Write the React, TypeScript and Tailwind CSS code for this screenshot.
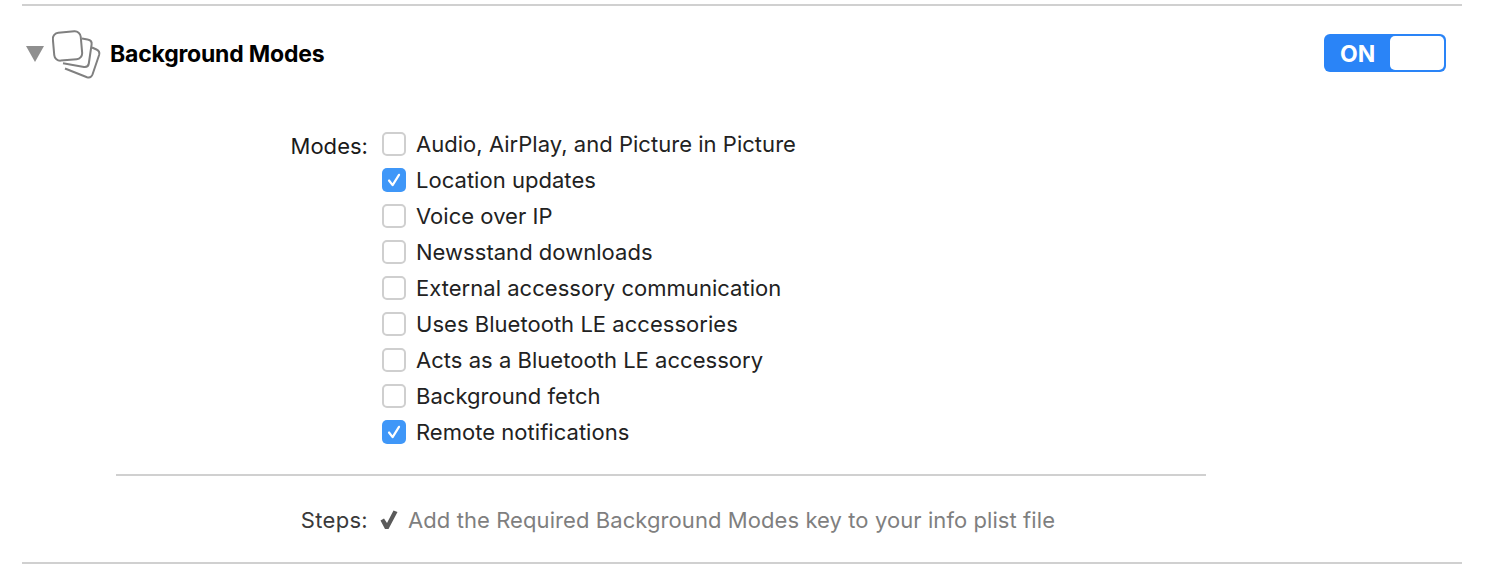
const modes = [
  { label: "Audio, AirPlay, and Picture in Picture", checked: false },
  { label: "Location updates", checked: true },
  { label: "Voice over IP", checked: false },
  { label: "Newsstand downloads", checked: false },
  { label: "External accessory communication", checked: false },
  { label: "Uses Bluetooth LE accessories", checked: false },
  { label: "Acts as a Bluetooth LE accessory", checked: false },
  { label: "Background fetch", checked: false },
  { label: "Remote notifications", checked: true },
];

function Checkbox({ checked }: { checked: boolean }) {
  if (checked) {
    return (
      <span className="flex h-6 w-6 items-center justify-center rounded-[5px] bg-[#3f97f8]">
        <svg className="h-6 w-6" viewBox="0 0 24 24" fill="none" aria-hidden="true">
          <path
            d="M7 12.5L10.6 17.2L17 6.8"
            stroke="white"
            strokeWidth="2.2"
            strokeLinecap="round"
            strokeLinejoin="round"
          />
        </svg>
      </span>
    );
  }
  return <span className="h-6 w-6 rounded-[5px] border-2 border-[#cfcfcf] bg-white" />;
}

export default function App() {
  return (
    <div className="h-[588px] w-[1494px] bg-white pt-1 pl-[22px] font-['Inter',sans-serif] text-[22px] leading-9 tracking-[0.03px]">
      <div className="h-[560px] w-[1440px] border-y-2 border-[#d0d0d0]">
        <div className="flex h-[96px] items-center justify-between pr-4">
          <div className="flex items-center">
            <svg className="ml-1 h-4 w-[18px]" viewBox="0 0 18 16" aria-hidden="true">
              <path d="M0 0H18L9 16Z" fill="#8f8f8f" />
            </svg>
            <svg className="ml-2 h-[52px] w-[50px]" viewBox="0 0 50 52" fill="none" aria-hidden="true">
              <rect x="1.5" y="4" width="28" height="28" rx="6" stroke="#808080" strokeWidth="2" transform="rotate(-5 15 18)" />
              <path d="M30 10.5L35.5 11.5C38.5 12 40 14 39.6 16.5L36.8 35.5C36.4 38 34.5 39.2 32 38.9L11 35.2" stroke="#808080" strokeWidth="2" />
              <path d="M40 19.5L44.5 21.5C46.8 22.5 47.8 24.5 47.1 27L40.5 46.5C39.5 49 37.5 50 35 49.2L13 40.5" stroke="#808080" strokeWidth="2" />
            </svg>
            <span className="ml-2 text-[23px] font-bold tracking-[-0.2px] text-black">Background Modes</span>
          </div>
          <div className="mb-0.5 flex h-[38px] w-[122px] items-center rounded-[6px] bg-[#2a84f7] p-0.5">
            <span className="w-[64px] pt-0.5 pl-[14px] text-[23px] leading-none font-bold text-white">ON</span>
            <span className="h-full flex-1 rounded-[5px] bg-white" />
          </div>
        </div>

        <div className="mt-[24px] flex">
          <div className="w-[346px] text-right text-[#1a1a1a]">
            <span className="relative top-0.5">Modes:</span>
          </div>
          <div className="ml-3.5 flex flex-col">
            {modes.map((mode) => (
              <div key={mode.label} className="flex h-9 items-center gap-[10px]">
                <Checkbox checked={mode.checked} />
                <span className="text-[#222222]">{mode.label}</span>
              </div>
            ))}
          </div>
        </div>

        <div className="mt-6 ml-[94px] h-0.5 w-[1090px] bg-[#d0d0d0]" />

        <div className="mt-[26px] flex items-center">
          <span className="w-[346px] text-right tracking-[0.3px] text-[#3a3a3a]">Steps:</span>
          <svg className="ml-3 h-5 w-[18px]" viewBox="0 0 18 20" aria-hidden="true">
            <path d="M0.5 10.5L4 8.5L7 13L13.5 0.5L17.5 2L8.5 19H5Z" fill="#5a5a5a" />
          </svg>
          <span className="ml-2.5 tracking-[0.08px] text-[#7f7f7f]">Add the Required Background Modes key to your info plist file</span>
        </div>
      </div>
    </div>
  );
}
